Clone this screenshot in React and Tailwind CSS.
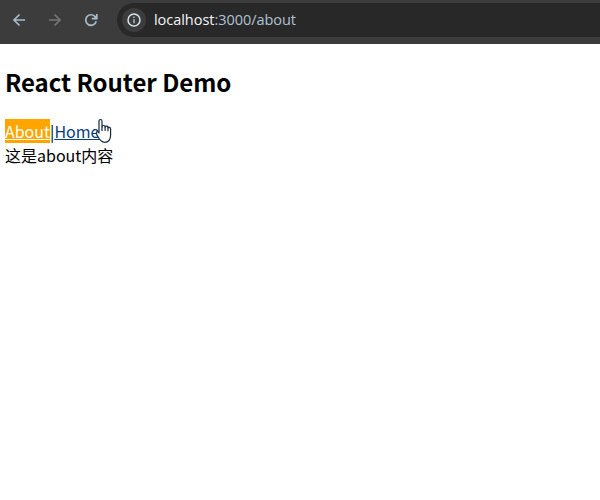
import React from "react";

function BrowserBar() {
  return (
    <header className="flex h-11 items-center bg-[#3c3c3c] pb-1 pl-[9px]">
      <svg className="h-5 w-5 shrink-0" viewBox="0 0 20 20" fill="none" stroke="#a4bccd" strokeWidth="1.7">
        <path d="M16 10H5M10.5 4.5L5 10L10.5 15.5" />
      </svg>
      <svg className="ml-4 h-5 w-5 shrink-0" viewBox="0 0 20 20" fill="none" stroke="#74777a" strokeWidth="1.7">
        <path d="M4 10h11M9.5 4.5L15 10L9.5 15.5" />
      </svg>
      <svg className="ml-4 h-5 w-5 shrink-0" viewBox="0 0 20 20" fill="none" stroke="#a4bccd" strokeWidth="1.7">
        <path d="M15.2 11.3A5.3 5.3 0 1 1 13.8 6.3L15.4 8" />
        <path d="M10.8 8.6H15.8V4" />
        <path d="M12.8 8.2L15.4 5.6V8.2Z" fill="#a4bccd" stroke="none" />
      </svg>
      <div className="ml-4 flex h-[34px] flex-1 items-center rounded-l-full bg-[#282828] pl-[5px]">
        <span className="flex h-6 w-6 items-center justify-center rounded-full bg-[#3c3c3c]">
          <svg className="h-4 w-4" viewBox="0 0 16 16" fill="none" stroke="#d8e4ea" strokeWidth="1.5">
            <circle cx="8" cy="8" r="6" />
            <path d="M8 7.2v4M8 4.5v1.5" stroke="#a9b7c4" />
          </svg>
        </span>
        <span className="ml-2 font-['Open_Sans',sans-serif] text-[14.5px] leading-5 tracking-[-0.04px] whitespace-nowrap text-[#b0c2d2]">
          <span className="text-[#f2f5f8]">localhost</span>:3000/about
        </span>
      </div>
    </header>
  );
}

function HandCursor() {
  return (
    <svg className="absolute top-[118px] left-[95px] h-[26px] w-[18px]" viewBox="0 0 18 26" fill="white" stroke="#182a3c" strokeWidth="1.2" strokeLinejoin="round" strokeLinecap="round">
      <path d="M4 15V3.2Q4 1.5 5.5 1.5T7 3.2V9Q7.2 7.4 8.7 7.5T10.1 9Q10.5 8 11.8 8.2T13 9.7Q13.4 9 14.5 9.4T15.6 11V17C15.6 21.5 13.5 24.3 9.5 24.3C5.5 24.3 4.2 21 2.2 17.4Q0.6 14.6 1.8 13.8Q3 13.3 4 15Z" />
      <path d="M7 9v3.5M10.1 9v3.5M13 9.7v3" fill="none" />
    </svg>
  );
}

export default function App() {
  return (
    <div className="relative h-[500px] w-[600px] overflow-hidden bg-white font-['Noto_Sans_CJK_SC',sans-serif] text-black">
      <BrowserBar />
      <main className="pt-5 pl-[5px]">
        <h2 className="text-2xl leading-[35px] font-bold tracking-[-0.04px]">React Router Demo</h2>
        <nav className="mt-5 flex h-6 text-base leading-6">
          <a className="bg-[#ffa500] text-white underline" href="#about">About</a>
          <span>|</span>
          <a className="text-[#063c83] underline" href="#home">Home</a>
        </nav>
        <p className="text-base leading-6">这是about内容</p>
      </main>
      <HandCursor />
    </div>
  );
}
